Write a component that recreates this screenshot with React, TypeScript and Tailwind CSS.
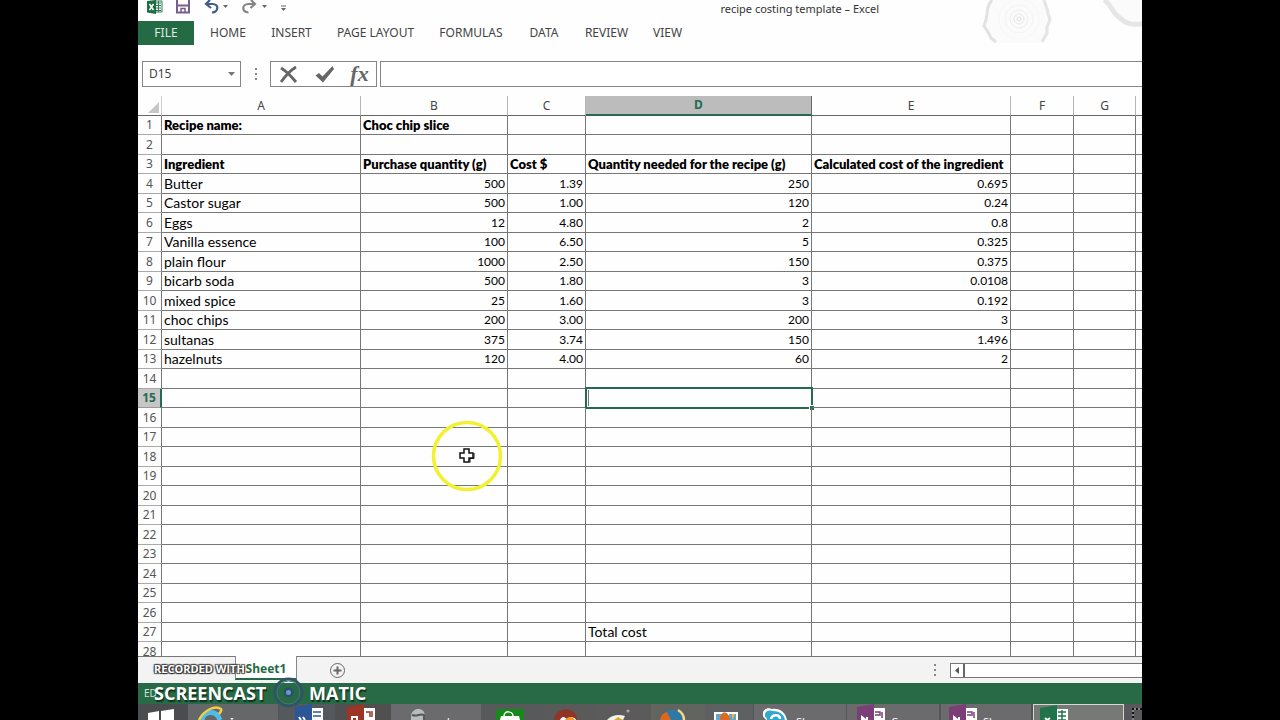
import { Fragment, type ReactNode } from "react";

type Row = [string, string, string, string, string];

const columns = [
  { name: "A", width: "w-[199px]" },
  { name: "B", width: "w-[147px]" },
  { name: "C", width: "w-[78px]" },
  { name: "D", width: "w-[226px]" },
  { name: "E", width: "w-[199px]" },
  { name: "F", width: "w-[63px]" },
  { name: "G", width: "w-[62px]" },
  { name: "", width: "" },
];

const data: Record<number, Row> = {
  1: ["Recipe name:", "Choc chip slice", "", "", ""],
  3: ["Ingredient", "Purchase quantity (g)", "Cost $", "Quantity needed for the recipe (g)", "Calculated cost of the ingredient"],
  4: ["Butter", "500", "1.39", "250", "0.695"],
  5: ["Castor sugar", "500", "1.00", "120", "0.24"],
  6: ["Eggs", "12", "4.80", "2", "0.8"],
  7: ["Vanilla essence", "100", "6.50", "5", "0.325"],
  8: ["plain flour", "1000", "2.50", "150", "0.375"],
  9: ["bicarb soda", "500", "1.80", "3", "0.0108"],
  10: ["mixed spice", "25", "1.60", "3", "0.192"],
  11: ["choc chips", "200", "3.00", "200", "3"],
  12: ["sultanas", "375", "3.74", "150", "1.496"],
  13: ["hazelnuts", "120", "4.00", "60", "2"],
  27: ["", "", "", "Total cost", ""],
};

const rowNumbers = Array.from({ length: 28 }, (_, i) => i + 1);

const ribbonTabs = [
  { name: "HOME", width: "w-[62px]" },
  { name: "INSERT", width: "w-[65px]" },
  { name: "PAGE LAYOUT", width: "w-[103px]" },
  { name: "FORMULAS", width: "w-[88px]" },
  { name: "DATA", width: "w-[58px]" },
  { name: "REVIEW", width: "w-[67px]" },
  { name: "VIEW", width: "w-[55px]" },
];

function TitleBar() {
  return (
    <div className="flex h-5 items-start">
      <div className="flex flex-1 items-start pl-2">
        <svg width="150" height="16" viewBox="0 0 150 16" fill="none" aria-hidden="true">
          <path d="M8 1h8v11H8z" fill="#fff" stroke="#2f7d52" />
          <path d="M10 3h5M10 5.500h5M10 8h5M10 10.500h5M12.500 1v11" stroke="#2f7d52" />
          <path d="M1 1 10 0v14L1 12.500z" fill="#1f6e43" />
          <path d="m3.500 4 4 6m0-6-4 6" stroke="#fff" strokeWidth="1.500" />
          <path d="M31 0v12.500h12V0" stroke="#75608a" strokeWidth="2" />
          <path d="M32 5.500h10" stroke="#75608a" strokeWidth="2" />
          <path d="M35 12V8.500h4V12" stroke="#75608a" strokeWidth="1.500" />
          <path d="M64 0 60 4l5 4M60 4h6.500c7 0 6 8-.5 8.500" stroke="#3f5d88" strokeWidth="2.200" />
          <path d="M77 5h5l-2.500 3zM116 5h5l-2.500 3z" fill="#666" />
          <path d="m105 0 4 4-4.500 4M109 4h-6.500c-7 0-7 8 0 8.500" stroke="#858585" strokeWidth="2.200" />
          <path d="M135 6h5" stroke="#666" />
          <path d="M135 8h5l-2.500 3z" fill="#666" />
        </svg>
      </div>
      <h1 className="font-[Noto_Sans,sans-serif] text-[11px] leading-[18px] text-[#333]">recipe costing template – Excel</h1>
      <div className="w-[263px]" />
    </div>
  );
}

function HeaderArt() {
  return (
    <svg className="absolute top-0 right-0" width="164" height="44" viewBox="0 0 164 44" fill="none" aria-hidden="true">
      <path d="M12 0c-5 8-4 12-5 22 1 9 3 14 10 21h46c8-8 7-14 9-22 0-9-2-14-6-21z" fill="#fbfbfb" />
      <path d="M14 0c-4 5-5 9-5 14l-1 6-2 6 4 6 3 6 5 4" stroke="#e2e2e2" strokeWidth="3" />
      <path d="M66 0c1 5 4 8 4 14l2 6-3 7v6l-5 9" stroke="#e4e4e4" strokeWidth="3" />
      <circle cx="41" cy="19" r="20" stroke="#f7f7f7" />
      <circle cx="41" cy="19" r="14" stroke="#f3f3f3" />
      <circle cx="41" cy="19" r="9" stroke="#eee" />
      <circle cx="41" cy="19" r="5" stroke="#e8e8e8" />
      <circle cx="41" cy="19" r="2" stroke="#e0e0e0" />
      <path d="M127 0c10 12 14 22 37 24V0z" fill="#fbfbfb" />
      <path d="M126 0c8 5 8 13 16 18 6 6 12 7 22 6" stroke="#e6e6e6" strokeWidth="5" />
    </svg>
  );
}

function Ribbon() {
  return (
    <nav className="mt-px flex h-6 font-[Noto_Sans,sans-serif] text-[12px] text-[#444]">
      <button className="mr-[3px] w-14 bg-[#246b45] text-[#dcebe2]">FILE</button>
      {ribbonTabs.map((tab) => (
        <button key={tab.name} className={`${tab.width} whitespace-nowrap`}>
          {tab.name}
        </button>
      ))}
    </nav>
  );
}

function Dots({ className }: { className: string }) {
  return (
    <div className={`flex flex-col items-center justify-center gap-[3px] ${className}`}>
      <span className="size-[2px] bg-[#888]" />
      <span className="size-[2px] bg-[#888]" />
      <span className="size-[2px] bg-[#888]" />
    </div>
  );
}

function FormulaBar() {
  return (
    <div className="mt-4 mb-[9px] flex h-[26px] pl-1">
      <div className="flex w-[99px] border border-[#858585] bg-white">
        <input
          aria-label="Name box"
          defaultValue="D15"
          className="w-0 flex-1 pl-[6px] font-[Noto_Sans,sans-serif] text-[12px] text-[#444] outline-none"
        />
        <button aria-label="Open name list" className="flex w-[18px] items-center justify-center">
          <svg width="7" height="4" viewBox="0 0 7 4" aria-hidden="true">
            <path d="M0 0h7L3.500 4z" fill="#777" />
          </svg>
        </button>
      </div>
      <Dots className="w-[29px]" />
      <div className="mr-[3px] flex w-[107px] items-center border border-[#858585] bg-white text-[#666]">
        <button aria-label="Cancel" className="flex w-9 justify-center">
          <svg width="18" height="17" viewBox="0 0 18 17" fill="none" aria-hidden="true">
            <path d="M1 2c5 3 10 8 15 14M16 1C11 4 6 9 1 16" stroke="currentColor" strokeWidth="2.900" />
          </svg>
        </button>
        <button aria-label="Enter" className="flex w-9 justify-center">
          <svg width="20" height="17" viewBox="0 0 20 17" fill="none" aria-hidden="true">
            <path d="M.5 9.500 4 7l3.500 3.500L17.500 0 19 3 8 16.500z" fill="currentColor" />
          </svg>
        </button>
        <button aria-label="Insert function" className="flex-1 font-[Liberation_Serif,serif] text-[22px] leading-6 font-bold italic">
          fx
        </button>
      </div>
      <input aria-label="Formula bar" className="min-w-0 flex-1 border border-r-0 border-[#858585] bg-white outline-none" />
    </div>
  );
}

function cellClass(row: number, col: number) {
  if (row === 1 || row === 3) return "text-[13px] font-extrabold";
  return col > 0 && row < 27 ? "text-right text-[12px]" : "text-[14px]";
}

function Sheet() {
  return (
    <main className="relative min-h-0 flex-1 overflow-hidden">
      <table className="w-full table-fixed border-separate border-spacing-0 font-[Lato,sans-serif] text-[12px] leading-[18px] text-black">
        <thead className="font-[Noto_Sans,sans-serif] text-[#444]">
          <tr className="h-5">
            <th className="w-6 border-r border-b border-r-[#ccc] border-b-[#666] p-0" aria-label="Select all">
              <svg className="mt-1 ml-2.5" width="12" height="12" viewBox="0 0 12 12" aria-hidden="true">
                <path d="M11 0v11H0z" fill="#c6c6c6" />
              </svg>
            </th>
            {columns.map((col, i) => (
              <th
                key={i}
                scope="col"
                className={`p-0 last:border-r-0 ${col.width} ${
                  col.name === "D"
                    ? "border-r border-b-2 border-r-[#666] border-b-[#246b4f] bg-[#bcbcbc] font-bold text-[#246b4f]"
                    : "border-r border-b border-r-[#b5b5b5] border-b-[#666] font-normal"
                }`}
              >
                {col.name}
              </th>
            ))}
          </tr>
        </thead>
        <tbody>
          {rowNumbers.map((row) => (
            <tr key={row} className="odd:h-[19px] even:h-5">
              <th
                scope="row"
                className={`border-b p-0 text-center font-[Noto_Sans,sans-serif] ${
                  row === 15
                    ? "border-r-2 border-r-[#246b4f] border-b-[#999] bg-[#c6c6c6] font-bold text-[#246b4f]"
                    : "border-r border-r-[#777] border-b-[#aaa] font-normal text-[#555]"
                }`}
              >
                {row}
              </th>
              {columns.map((col, i) => (
                <td key={i} className={`relative border-r border-b border-[#777] px-[2px] py-0 whitespace-nowrap last:border-r-0 ${cellClass(row, i)}`}>
                  {data[row]?.[i]}
                  {row === 15 && col.name === "D" && (
                    <Fragment>
                      <span className="absolute -top-[2px] -right-[2px] -bottom-[2px] -left-px border-2 border-[#246b4f]" />
                      <span className="absolute inset-y-px left-[2px] w-px bg-[#777]" />
                      <span className="absolute -right-[3px] -bottom-[3px] size-[5px] border-t border-l border-white bg-[#246b4f]" />
                    </Fragment>
                  )}
                </td>
              ))}
            </tr>
          ))}
        </tbody>
      </table>
      <svg className="absolute top-[324px] left-[293px]" width="72" height="72" viewBox="0 0 72 72" fill="none" aria-hidden="true">
        <circle cx="36" cy="36" r="33.500" stroke="#f1f12f" strokeWidth="3.500" />
        <path d="M33 29h5v4h4v5h-4v4h-5v-4h-4v-5h4z" fill="#fff" stroke="#111" strokeWidth="1.500" />
        <path d="M39 42.500v-4h4V33" stroke="#111" />
      </svg>
    </main>
  );
}

function SheetTabs() {
  return (
    <div className="flex h-[27px] bg-[#f3f3f3]">
      <div className="w-[97px] border-t border-[#777]" />
      <button className="h-6 w-[62px] border-x border-b-2 border-x-[#888] border-b-[#246b45] bg-white pt-[3px] text-center font-[Noto_Sans,sans-serif] text-[12px] leading-[18px] font-bold text-[#246b45]">
        Sheet1
      </button>
      <div className="flex flex-1 items-center border-t border-[#777] pl-8">
        <button aria-label="New sheet">
          <svg width="17" height="17" viewBox="0 0 17 17" fill="none" stroke="#666" aria-hidden="true">
            <circle cx="8.500" cy="8.500" r="7" />
            <path d="M8.500 4.500v8M4.500 8.500h8" strokeWidth="2" />
          </svg>
        </button>
        <div className="flex-1" />
        <Dots className="mr-3.5" />
        <div className="flex h-[15px] w-[192px] border border-r-0 border-[#777] bg-white">
          <button aria-label="Scroll left" className="flex w-3.5 items-center justify-center border-r-2 border-[#666]">
            <svg width="4" height="7" viewBox="0 0 4 7" aria-hidden="true">
              <path d="M4 0v7L0 3.500z" fill="#555" />
            </svg>
          </button>
        </div>
      </div>
    </div>
  );
}

function OfficeIcon({ color, letter, lines }: { color: string; letter: string; lines: string }) {
  return (
    <>
      <path d="M14 4h14v12H14z" fill="#fff" />
      <path d={lines} stroke={color} strokeWidth="1.500" />
      <path d="M0 3 17 0v16H0z" fill={color} />
      <path d={letter} stroke="#fff" strokeWidth="2" />
    </>
  );
}

const taskItems: { width: string; look: string; pad: string; label?: string; name: string; icon: ReactNode }[] = [
  {
    name: "Start", width: "w-[50px]", look: "bg-[#4a4c4f]", pad: "pl-2.5",
    icon: <path d="m0 9 11-2v9H0zM13 7l13-2v11H13z" fill="#fff" />,
  },
  {
    name: "Internet Explorer", width: "w-[91px]", look: "bg-[#666769] border-r border-[#555]", pad: "pl-2", label: "I",
    icon: (
      <>
        <path d="M6 16C7 7 20 5 24 16" stroke="#51bce8" strokeWidth="5" />
        <path d="M3 16C8 6 19 1 25 5c1 2-1 4-2 5" stroke="#f0cf45" strokeWidth="2.500" />
      </>
    ),
  },
  {
    name: "Word", width: "w-[56px]", look: "bg-[#55585d]", pad: "pl-4",
    icon: <OfficeIcon color="#2b5797" letter="m4 13 2 3m2-3 2 3" lines="M18 8h8M18 12h8" />,
  },
  {
    name: "PowerPoint", width: "w-[56px]", look: "bg-[#505050]", pad: "pl-3",
    icon: <OfficeIcon color="#9c3526" letter="M5 16v-3h5v3" lines="M19 8h4v5M25 7v6" />,
  },
  {
    name: "Contacts", width: "w-[90px]", look: "bg-[#6b6b6d]", pad: "pl-[18px]", label: "d",
    icon: (
      <>
        <path d="M2 16v-5c3-9 14-7 14 1v4z" fill="#b9bcbf" />
        <path d="M3 11c5 2 8-2 12 0v5" stroke="#55585b" strokeWidth="2" />
      </>
    ),
  },
  {
    name: "Store", width: "w-[62px]", look: "bg-[#58595a]", pad: "pl-[15px]",
    icon: (
      <>
        <path d="M0 5h28v11H0z" fill="#158a18" />
        <path d="M5 12h18l1 4H4z" fill="#fff" />
        <path d="M8 12c0-6 9-5 9 0" stroke="#fff" strokeWidth="1.500" />
      </>
    ),
  },
  {
    name: "Game", width: "w-[54px]", look: "bg-[#5a5a5b]", pad: "pl-2.5",
    icon: (
      <>
        <path d="M1 16C2 2 22 2 24 14v2z" fill="#8e3526" />
        <path d="M7 16c2-5 6-3 7 0 2-4 8-3 9 0z" fill="#fff" />
        <path d="M12 16c3-4 7-4 10 0z" fill="#ee9a2d" />
      </>
    ),
  },
  {
    name: "Paint", width: "w-[54px]", look: "bg-[#5a5b5a]", pad: "pl-2",
    icon: (
      <>
        <path d="M2 16C6 11 14 10 20 12l-2 4z" fill="#f4f4ee" />
        <path d="m9 16 4-3 5 3z" fill="#d8aa32" />
        <circle cx="23" cy="7" r="1.500" fill="#bda59d" />
      </>
    ),
  },
  {
    name: "Firefox", width: "w-[54px]", look: "bg-[#62645f]", pad: "pl-2",
    icon: (
      <>
        <path d="M3 16C3 3 22 1 24 16z" fill="#2f77a5" />
        <path d="M1 16c1-5 3-7 7-8l4 8z" fill="#dc671f" />
        <path d="M19 6c5 3 6 6 6 10" stroke="#f5d98a" strokeWidth="2.500" />
      </>
    ),
  },
  {
    name: "Photos", width: "w-[48px]", look: "bg-[#5f6061]", pad: "pl-2",
    icon: (
      <>
        <path d="M1 8h24v8H1z" fill="#fff" />
        <path d="M3 10h8v6H3zM16 10h7v6h-7z" fill="#65a6cf" />
        <path d="M7 16c0-10 9-10 10 0z" fill="#e06a22" />
        <path d="M19 16v-6h3z" fill="#efb93c" />
      </>
    ),
  },
  {
    name: "Skype", width: "w-[94px]", look: "bg-[#6b6b6d] border-x border-[#555]", pad: "pl-2", label: "Sk",
    icon: (
      <>
        <path d="M1 11C0 5 6 3 10 5c7-1 13 2 15 11H4c-1-2-3-2-3-5z" fill="#fff" />
        <path d="M3 11c0-5 6-5 8-4 6 0 11 3 12 9H5c0-3-2-2-2-5z" fill="#32a8cf" />
        <path d="M9 15c1-5 9-5 9 0" stroke="#fff" strokeWidth="2.500" />
      </>
    ),
  },
  {
    name: "OneNote", width: "w-[94px]", look: "bg-[#6b6b6d] border-r-2 border-[#555]", pad: "pl-2.5", label: "Ca",
    icon: <OfficeIcon color="#7a3f76" letter="M5 16v-3l5 4v-4" lines="M18 8h5v3h-5M25 8v6" />,
  },
  {
    name: "OneNote notebook", width: "w-[92px]", look: "bg-[#6b6b6d] border-r-2 border-[#555]", pad: "pl-2", label: "Sk",
    icon: <OfficeIcon color="#7a3f76" letter="M5 16v-3l5 4v-4" lines="M18 8h5v3h-5M25 8v6" />,
  },
  {
    name: "Excel", width: "w-[91px]", look: "bg-[#777976] border border-b-0 border-[#d5d8d2]", pad: "pl-[6px]", label: "r",
    icon: <OfficeIcon color="#21744a" letter="m5 13 5 4m0-4-5 4" lines="M18 7h8M18 11h8M22 5v11M18 15h8" />,
  },
];

function Taskbar() {
  return (
    <div className="flex h-4 overflow-hidden bg-[#59595b]">
      {taskItems.map((item) => (
        <button
          key={item.name}
          aria-label={item.name}
          className={`flex shrink-0 items-start gap-1.5 overflow-hidden ${item.width} ${item.look} ${item.pad}`}
        >
          <svg className="shrink-0" width="28" height="16" viewBox="0 0 28 16" fill="none" aria-hidden="true">
            {item.icon}
          </svg>
          {item.label && <span className="pt-2.5 text-[11px] leading-4 text-white">{item.label}</span>}
        </button>
      ))}
      <svg className="ml-2 shrink-0" width="10" height="16" viewBox="0 0 10 16" fill="none" aria-hidden="true">
        <path d="M1 16V5h9" stroke="#111" strokeWidth="2" />
        <path d="M1 16V5h9" stroke="#fff" strokeDasharray="2 2" />
      </svg>
    </div>
  );
}

function Watermark() {
  return (
    <div className="absolute bottom-3 left-4 font-[Open_Sans,sans-serif] font-bold text-white">
      <p className="text-[11px] leading-4 [text-shadow:1px_1px_1px_#222,-1px_-1px_1px_#444,1px_-1px_1px_#444,-1px_1px_1px_#444]">
        RECORDED WITH
      </p>
      <div className="flex items-center text-[18px] leading-[30px] [text-shadow:1px_2px_1px_#12301f]">
        <span className="w-[119px]">SCREENCAST</span>
        <svg className="mr-[5px]" width="31" height="31" viewBox="0 0 31 31" fill="none" aria-hidden="true">
          <circle cx="15.500" cy="15.500" r="13.500" stroke="#2d5566" strokeWidth="3" />
          <circle cx="15.500" cy="15.500" r="11.500" stroke="#44776a" />
          <circle cx="15.500" cy="15.500" r="5" fill="#294f73" />
          <circle cx="15.500" cy="15.500" r="2.500" fill="#6a9bc4" />
        </svg>
        <span>MATIC</span>
      </div>
    </div>
  );
}

export default function App() {
  return (
    <div className="h-screen overflow-hidden bg-black px-[138px]">
      <div className="relative flex h-full flex-col overflow-hidden bg-[#fefefe]">
        <HeaderArt />
        <TitleBar />
        <Ribbon />
        <FormulaBar />
        <Sheet />
        <SheetTabs />
        <div className="flex h-[21px] items-center bg-[#276a45] pl-1.5 font-[Noto_Sans,sans-serif] text-[10px] text-[#cfe3d6]">ED</div>
        <Taskbar />
        <Watermark />
      </div>
    </div>
  );
}
